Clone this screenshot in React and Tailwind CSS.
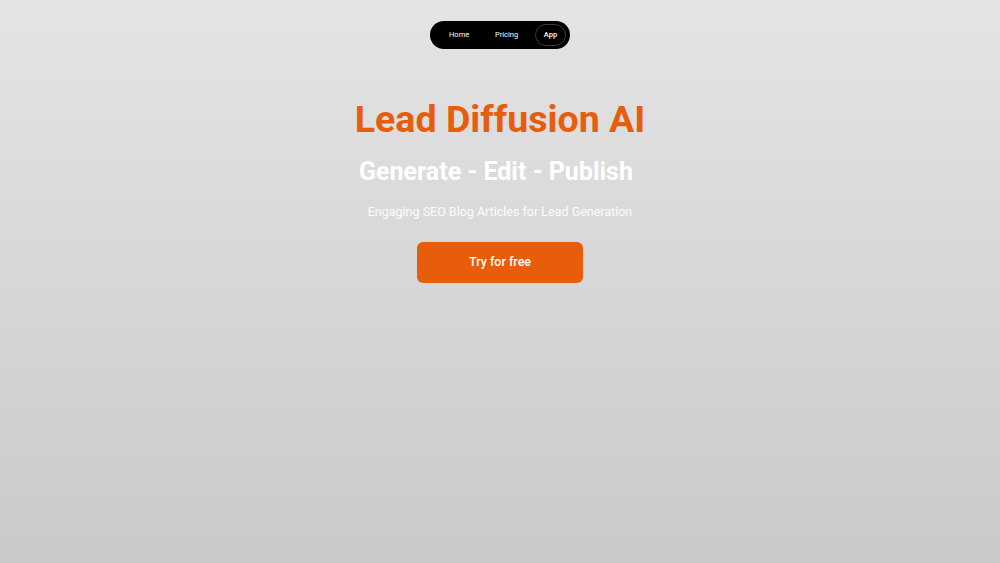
export default function App() {
  return (
    <div
      className="w-full min-h-[563px] bg-gradient-to-b from-[#e4e4e4] to-[#c9c9c9] flex flex-col items-center antialiased"
      style={{ fontFamily: "Roboto, 'Liberation Sans', sans-serif" }}
    >
      <nav className="mt-[21px] h-[28px] w-[140px] bg-black rounded-full flex items-center pl-[19px] pr-[4px] text-white text-[7.5px]">
        <span className="w-[20px]">Home</span>
        <span className="ml-[26px]">Pricing</span>
        <span className="ml-auto w-[31px] h-[22px] rounded-full border border-[#3a3a3a] flex items-center justify-center font-medium">
          App
        </span>
      </nav>
      <h1 className="mt-[47px] text-[37.6px] leading-[46px] font-bold text-[#e85d0c]">
        Lead Diffusion AI
      </h1>
      <h2 className="mt-[15px] mr-[8px] text-[25px] leading-[30px] font-bold text-white">
        Generate - Edit - Publish
      </h2>
      <p className="mt-[17px] text-[12.5px] leading-[16px] text-white/90">
        Engaging SEO Blog Articles for Lead Generation
      </p>
      <button className="mt-[22px] w-[166px] h-[41px] rounded-[6px] bg-[#e85d0c] text-white text-[12.5px] font-medium">
        Try for free
      </button>
    </div>
  );
}
